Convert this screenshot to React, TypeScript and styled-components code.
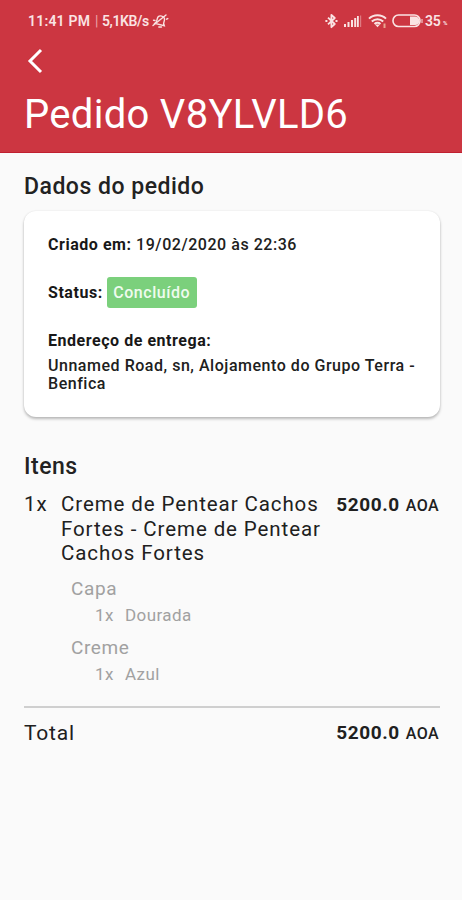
import React from "react";
import styled, { createGlobalStyle } from "styled-components";

const GlobalStyle = createGlobalStyle`
  *, *::before, *::after { box-sizing: border-box; }
  body {
    margin: 0;
    background: #fafafa;
    color: #202020;
    font-family: Roboto, "Liberation Sans", sans-serif;
    -webkit-font-smoothing: antialiased;
  }
`;

const Screen = styled.div`
  width: 462px;
  height: 900px;
  background: #fafafa;
  overflow: hidden;
`;

const Header = styled.header`
  height: 153px;
  background: #cc3641;
  color: #fff;
  border-bottom: 1px solid #c01f30;
`;

const StatusBar = styled.div`
  display: flex;
  align-items: center;
  justify-content: space-between;
  height: 42px;
  padding: 0 14px 0 28px;
  color: #fae3e3;
`;

const Clock = styled.div`
  display: flex;
  align-items: center;
  font-size: 14px;
  font-weight: 600;
  line-height: 16px;
  white-space: pre;
`;

const Time = styled.span`
  width: 67px;
  letter-spacing: 0.2px;
`;

const Speed = styled.span`
  width: 50px;
  letter-spacing: -0.4px;
`;

const Pipe = styled.span`
  width: 7px;
  color: #eba5a8;
  font-weight: 400;
`;

const Indicators = styled.div`
  display: flex;
  align-items: center;
`;

const Level = styled.span`
  width: 18px;
  margin-left: 2px;
  font-size: 14px;
  font-weight: 600;
  line-height: 16px;
  letter-spacing: -0.3px;
`;

const Percent = styled.span`
  width: 5px;
  padding-top: 4px;
  font-size: 6px;
  font-weight: 700;
  line-height: 8px;
`;

const BackButton = styled.button`
  display: flex;
  align-items: center;
  width: 48px;
  height: 38px;
  margin: 0 0 0 24px;
  padding: 0;
  border: 0;
  background: none;
  color: inherit;
`;

const Title = styled.h1`
  margin: 11px 0 0 24px;
  font-size: 40px;
  font-weight: 400;
  line-height: 48px;
  letter-spacing: 0.3px;
  white-space: nowrap;
`;

const Content = styled.main`
  padding: 20px 22px 0 24px;
`;

const SectionTitle = styled.h2`
  margin: 0;
  font-size: 23px;
  font-weight: 500;
  line-height: 28px;
  letter-spacing: 0.5px;
  color: #222;
`;

const Card = styled.section`
  height: 206px;
  margin: 10px 0 36px;
  padding: 23.5px 24px 0;
  border-radius: 12px;
  background: #fff;
  box-shadow: 0 2px 3px rgba(0, 0, 0, 0.26), 0 0 2px rgba(0, 0, 0, 0.08);
  font-size: 16px;
  font-weight: 500;
  line-height: 19px;
  letter-spacing: 0.54px;
`;

const Line = styled.div`
  white-space: nowrap;
`;

const Label = styled.span`
  font-weight: 700;
  color: #181818;
`;

const StatusLine = styled.div`
  display: flex;
  align-items: center;
  gap: 4px;
  height: 31px;
  margin: 23px 0 23px;
`;

const Badge = styled.span`
  display: flex;
  align-items: center;
  justify-content: center;
  width: 90px;
  height: 31px;
  border-radius: 3px;
  background: #7bd07c;
  color: #effbef;
`;

const Address = styled.address`
  margin-top: 7px;
  font-style: normal;
  line-height: 18.5px;
  letter-spacing: 0.53px;
  white-space: nowrap;
`;

const ItemRow = styled.div`
  display: grid;
  grid-template-columns: 37px 1fr auto;
  margin-top: 11px;
  font-size: 20.5px;
  line-height: 24.5px;
  letter-spacing: 0.9px;
  white-space: nowrap;
`;

const Options = styled.dl`
  margin: 11px 0 0 47px;
  color: #a1a1a1;
  letter-spacing: 0.6px;
`;

const OptionName = styled.dt`
  font-size: 19px;
  line-height: 24px;
`;

const OptionValue = styled.dd`
  display: flex;
  margin: 3px 0 9px 24px;
  font-size: 17px;
  line-height: 23px;
  letter-spacing: 0.4px;
`;

const OptionQuantity = styled.span`
  width: 30px;
`;

const Price = styled.div`
  display: flex;
  align-items: baseline;
  gap: 6px;
  font-size: 19px;
  font-weight: 700;
  line-height: 26px;
  letter-spacing: 0.6px;
  padding-right: 1px;
`;

const Currency = styled.span`
  font-size: 16px;
  font-weight: 500;
  letter-spacing: 0.4px;
`;

const Divider = styled.hr`
  height: 2px;
  margin: 20px 0 12px;
  border: 0;
  background: #cfcfcf;
`;

const TotalRow = styled.div`
  display: flex;
  justify-content: space-between;
  font-size: 21px;
  line-height: 26px;
  letter-spacing: 0.8px;
`;

const MutedBell = () => (
  <svg width="17" height="16" viewBox="0 0 17 16" fill="none" stroke="currentColor" strokeWidth="1.4" strokeLinecap="round">
    <path d="M3.5 11.5h9.8l-1.2-2V6.3C12.1 4 10.5 2.8 8.5 2.8S4.8 4 4.8 6.300v3.200z" transform="rotate(14 8 8)" />
    <path d="M1 12.500 14 2M6.800 14h2.700M14.500 6.200l1.300-.6M1.500 7.200l1.500.3" />
  </svg>
);

const Bluetooth = () => (
  <svg width="13" height="16" viewBox="0 0 13 16" fill="none" stroke="currentColor" strokeWidth="1.8" strokeLinejoin="round">
    <path d="m3 4.700 6.800 6.300-3.400 3.200V1.800L9.800 5 3 11.300" />
    <path d="M.4 8h2M10.500 8h2" />
  </svg>
);

const Signal = () => (
  <svg width="18" height="14" viewBox="0 0 18 14" fill="currentColor">
    <rect x="0" y="10" width="2" height="3" />
    <rect x="3.500" y="8" width="2" height="5" />
    <rect x="7" y="6" width="2" height="7" />
    <rect x="10.200" y="4" width="2" height="9" />
    <rect x="16" y="1.500" width="1.200" height="11.500" opacity="0.4" />
    <rect x="13" y="2" width="1.800" height="11" />
  </svg>
);

const Wifi = () => (
  <svg width="19" height="16" viewBox="0 0 19 16" fill="none" stroke="currentColor" strokeWidth="2">
    <path d="M1 5.600c4.600-4.400 12.400-4.400 17 0M3.800 8.400c3.200-3 8.200-3 11.400 0M6.500 11c1.700-1.600 4.300-1.600 6 0" />
    <path d="m7 11.500 2.500 2.800 2.500-2.800z" fill="currentColor" stroke="none" />
    <path d="M16.500 10.500v4.500" stroke="#e9a48f" />
  </svg>
);

const Battery = () => (
  <svg width="31" height="14" viewBox="0 0 31 14" fill="none">
    <rect x="1" y="1" width="27" height="11.500" rx="5.500" stroke="currentColor" strokeWidth="1.600" />
    <path d="M18 2.500h5.200a4.250 4.250 0 0 1 0 8.500h-5.200z" fill="currentColor" />
    <path d="M30 5v4" stroke="currentColor" />
  </svg>
);

const IndicatorSlot = styled.span<{ $gap: number }>`
  display: flex;
  margin-right: ${({ $gap }) => $gap}px;
`;

const options = [
  { name: "Capa", value: "Dourada" },
  { name: "Creme", value: "Azul" },
];

const Amount = () => (
  <Price>
    5200.0 <Currency>AOA</Currency>
  </Price>
);

export default function App() {
  return (
    <>
      <GlobalStyle />
      <Screen>
        <Header>
          <StatusBar>
            <Clock>
              <Time>11:41 PM</Time>
              <Pipe>|</Pipe>
              <Speed>5,1KB/s</Speed>
              <MutedBell />
            </Clock>
            <Indicators>
              <IndicatorSlot $gap={6}><Bluetooth /></IndicatorSlot>
              <IndicatorSlot $gap={6}><Signal /></IndicatorSlot>
              <IndicatorSlot $gap={5}><Wifi /></IndicatorSlot>
              <Battery />
              <Level>35</Level>
              <Percent>%</Percent>
            </Indicators>
          </StatusBar>
          <BackButton aria-label="Voltar">
            <svg width="22" height="28" viewBox="0 0 22 28" fill="none" stroke="currentColor" strokeWidth="3">
              <path d="M17 3 6 14l11 11" />
            </svg>
          </BackButton>
          <Title>Pedido V8YLVLD6</Title>
        </Header>
        <Content>
          <SectionTitle>Dados do pedido</SectionTitle>
          <Card>
            <Line><Label>Criado em:</Label> 19/02/2020 às 22:36</Line>
            <StatusLine>
              <Label>Status:</Label>
              <Badge>Concluído</Badge>
            </StatusLine>
            <Line><Label>Endereço de entrega:</Label></Line>
            <Address>
              Unnamed Road, sn, Alojamento do Grupo Terra -<br />
              Benfica
            </Address>
          </Card>
          <SectionTitle>Itens</SectionTitle>
          <ItemRow>
            <span>1x</span>
            <div>
              Creme de Pentear Cachos<br />
              Fortes - Creme de Pentear<br />
              Cachos Fortes
            </div>
            <Amount />
          </ItemRow>
          <Options>
            {options.map((option) => (
              <React.Fragment key={option.name}>
                <OptionName>{option.name}</OptionName>
                <OptionValue>
                  <OptionQuantity>1x</OptionQuantity>
                  {option.value}
                </OptionValue>
              </React.Fragment>
            ))}
          </Options>
          <Divider />
          <TotalRow>
            <span>Total</span>
            <Amount />
          </TotalRow>
        </Content>
      </Screen>
    </>
  );
}
